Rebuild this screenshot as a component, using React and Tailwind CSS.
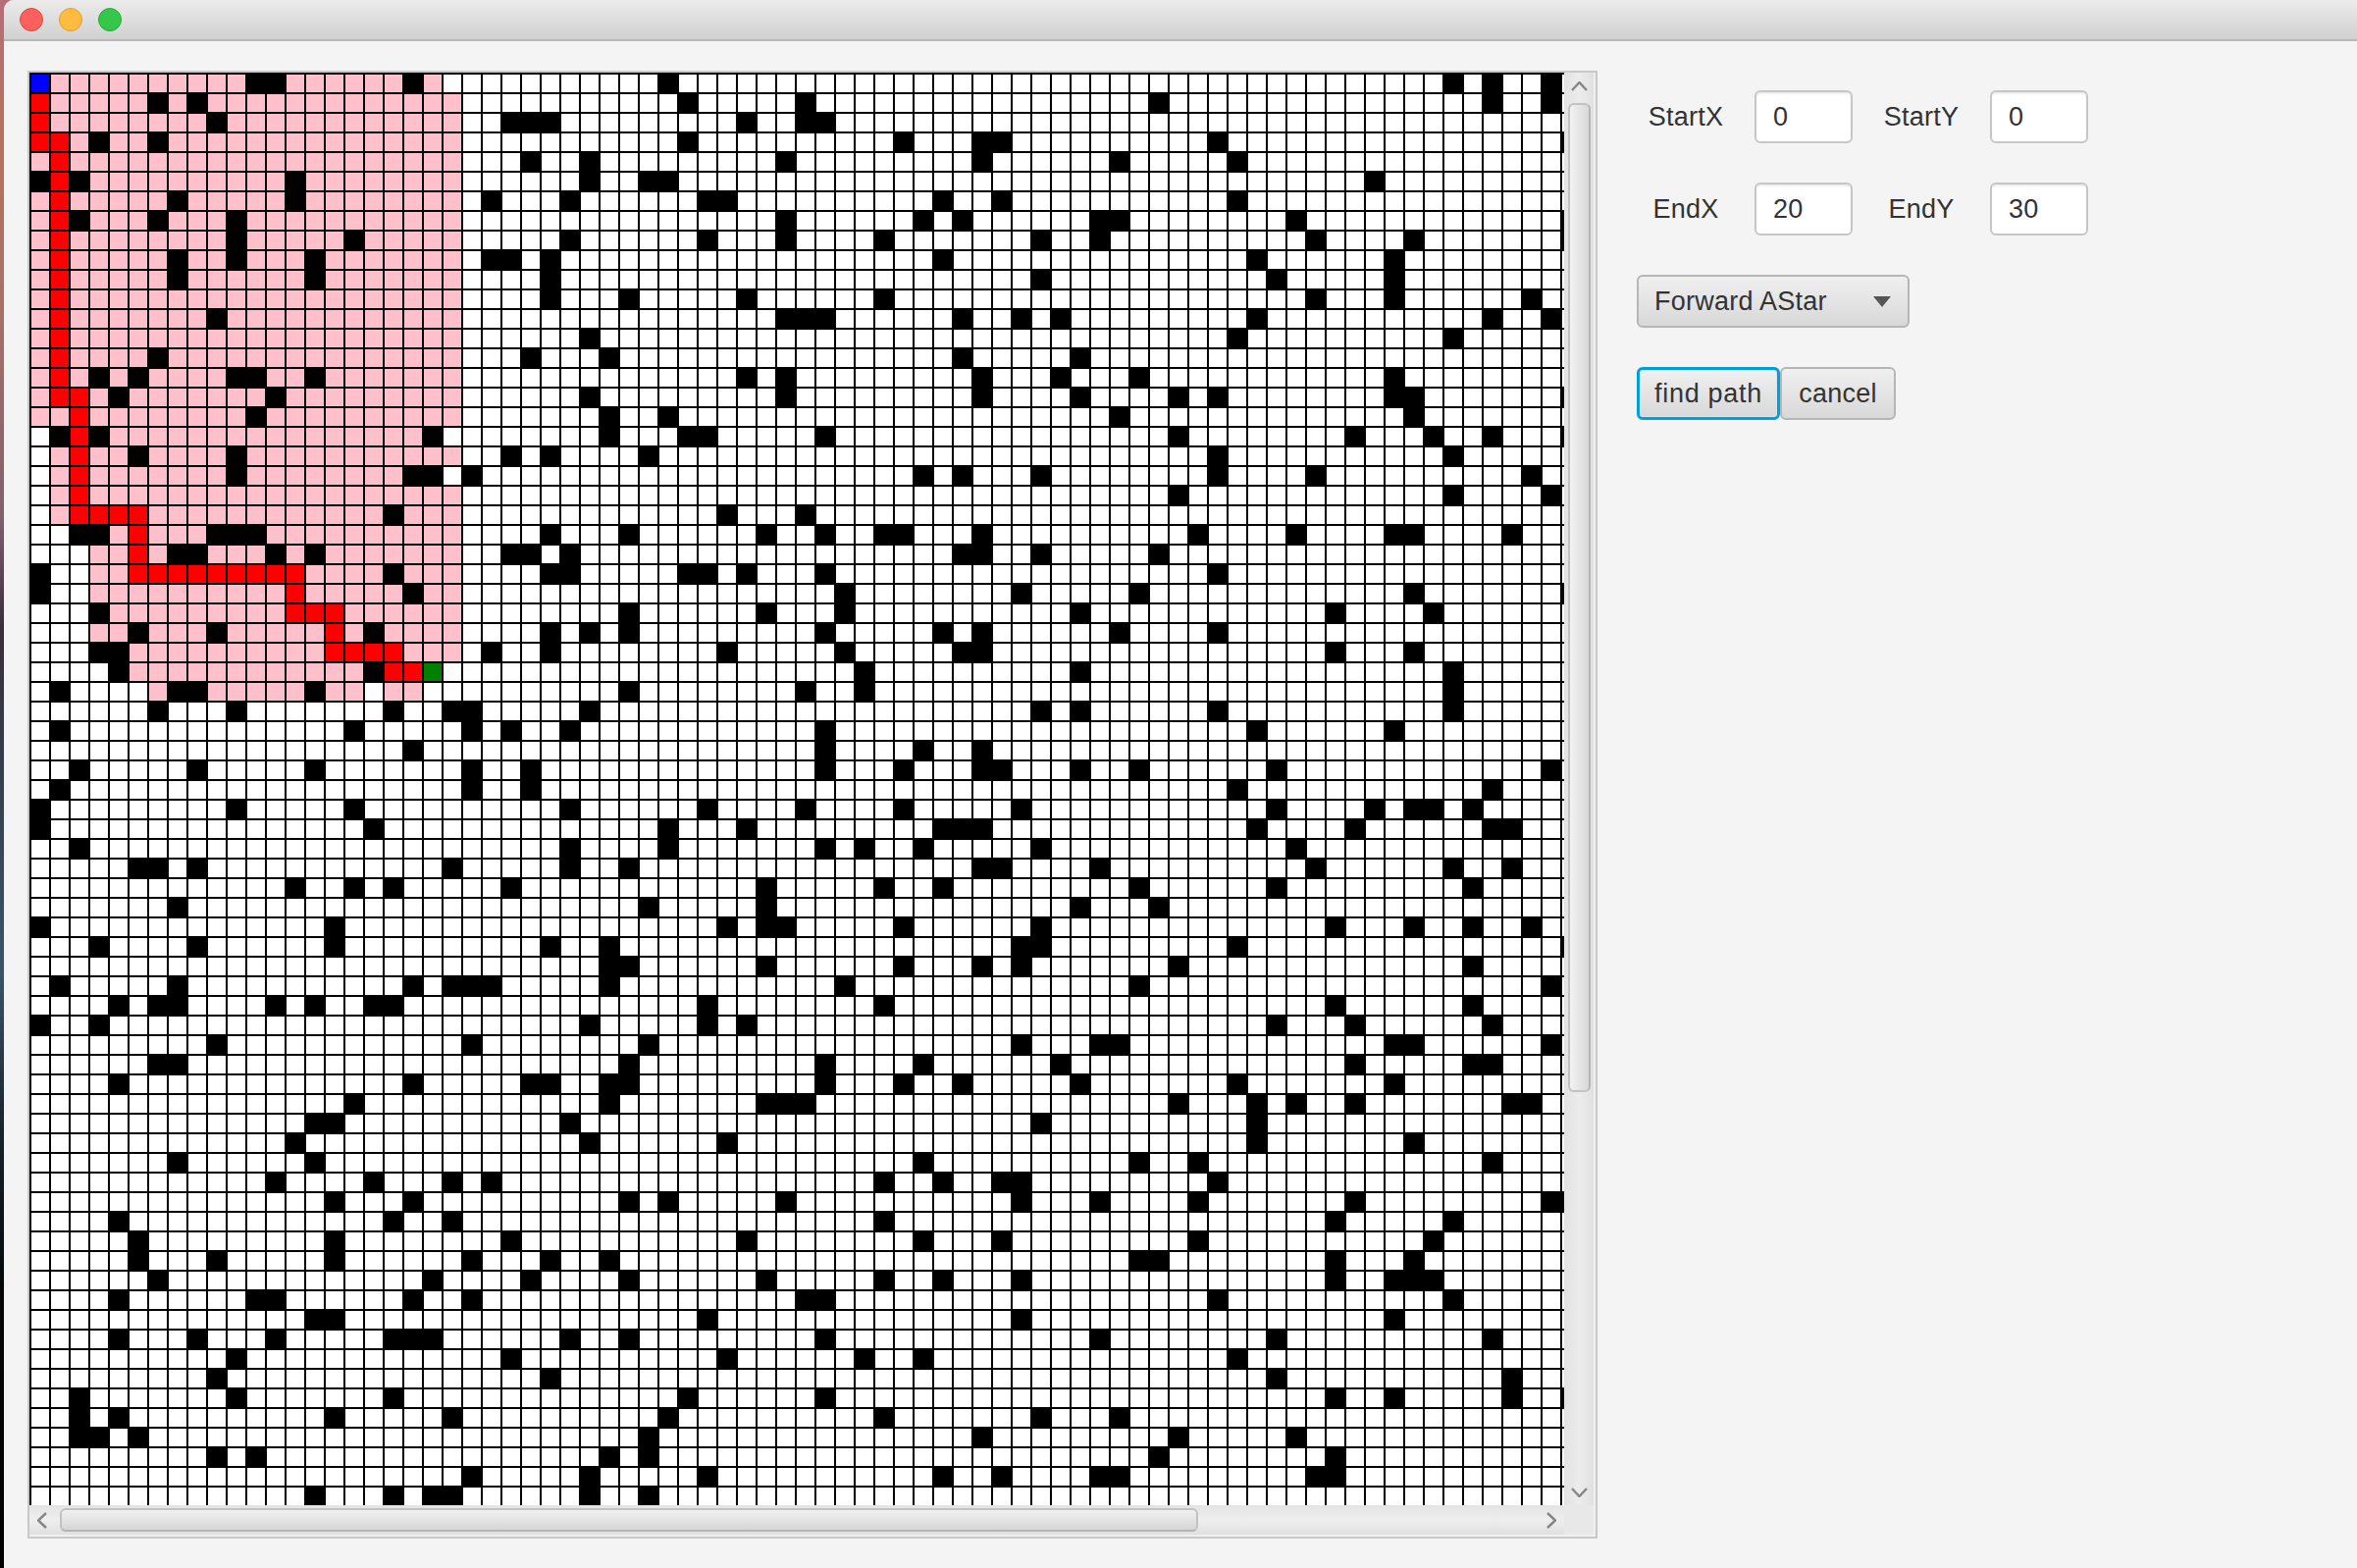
const BLACK = [
  [11,12,19,32,72,74,77],
  [6,8,33,39,57,74,77],
  [9,24,25,26,36,39,40],
  [3,6,33,44,48,49,60,78],
  [25,28,38,48,55,61],
  [0,2,13,28,31,32,68],
  [7,13,23,27,34,35,46,49,61],
  [2,6,10,38,45,47,54,55,64,78],
  [10,16,27,34,38,43,51,54,65,70,78],
  [7,10,14,23,24,26,46,62,69],
  [7,14,26,51,63,69],
  [26,30,36,43,65,69,76],
  [9,38,39,40,47,50,52,62,74,77],
  [28,61,72],
  [6,25,29,47,53],
  [3,5,10,11,14,36,38,48,52,56,69],
  [4,12,28,38,48,53,58,60,69,70,78],
  [11,29,32,55,70],
  [1,3,20,29,33,34,40,58,67,71,74,78],
  [5,10,24,26,31,60,72],
  [10,19,20,22,45,47,51,60,65,76],
  [58,72,77],
  [18,35,39],
  [2,3,9,10,11,26,30,37,40,43,44,48,59,64,69,70,75],
  [7,8,12,14,24,25,27,47,48,51,57],
  [0,18,26,27,33,34,36,40,60],
  [0,19,41,50,56,70,78],
  [3,30,37,41,53,66,71],
  [5,9,17,26,28,30,40,46,48,55,60],
  [3,4,23,26,35,41,47,48,66,70],
  [4,17,42,53,72],
  [1,7,8,14,30,39,42,72],
  [6,10,18,21,22,28,51,53,60,72],
  [1,16,22,24,27,40,62,69],
  [19,40,45,48],
  [2,8,14,22,25,40,44,48,49,53,56,63,77],
  [1,22,25,61,74],
  [0,10,16,27,34,39,44,50,63,68,70,71,73],
  [0,17,32,36,46,47,48,62,67,74,75],
  [2,27,32,40,42,45,51,64],
  [5,6,8,21,27,30,48,49,54,65,72,75],
  [13,16,18,24,37,43,46,56,63,73],
  [7,31,37,53,57],
  [0,15,35,37,38,44,51,66,70,73,76],
  [3,8,15,26,29,50,51,61,78],
  [29,30,37,44,48,50,58,73],
  [1,7,19,21,22,23,29,41,56,77],
  [4,6,7,12,14,17,18,34,43,66,73],
  [0,3,28,34,36,63,67,74],
  [9,22,31,50,54,55,69,70,77],
  [6,7,30,40,45,52,67,73,74],
  [4,19,25,26,29,30,40,44,47,53,61,69],
  [16,29,37,38,39,58,62,64,67,75,76],
  [14,15,27,51,62],
  [13,28,35,62,70],
  [7,14,45,56,59,74],
  [12,17,21,23,43,46,49,50,60],
  [15,19,30,32,38,50,54,59,67,77,78],
  [4,18,21,43,66,72],
  [5,15,24,36,45,49,59,71],
  [5,9,15,22,26,29,56,57,66,70],
  [6,20,25,30,37,43,46,50,66,69,70,71],
  [4,11,12,19,22,39,40,60,72],
  [14,15,34,50,69],
  [4,8,12,18,19,20,27,30,40,54,63,74],
  [10,24,35,42,45,61],
  [9,26,63,75],
  [2,10,18,33,40,66,69,75,78],
  [2,4,15,21,32,43,51,55],
  [2,3,5,31,48,58,64],
  [9,11,29,31,57,66],
  [22,28,34,46,49,54,55,65,66],
  [14,18,20,21,28,31],
];

const PATH = {
  1: [0], 2: [0], 3: [0, 1],
  4: [1], 5: [1], 6: [1], 7: [1], 8: [1], 9: [1], 10: [1], 11: [1], 12: [1], 13: [1], 14: [1], 15: [1],
  16: [1, 2], 17: [2], 18: [2], 19: [2], 20: [2], 21: [2],
  22: [2, 3, 4, 5], 23: [5], 24: [5],
  25: [5, 6, 7, 8, 9, 10, 11, 12, 13], 26: [13], 27: [13, 14, 15], 28: [15],
  29: [15, 16, 17, 18], 30: [18, 19],
};

const ROW_31_VISITED = [6, 9, 10, 11, 12, 13, 15, 16, 18, 19];

function isVisited(r, c) {
  if (r === 31) return ROW_31_VISITED.includes(c);
  if (r > 31) return false;
  let from = 0;
  if (r >= 18 && r <= 22) from = 1;
  else if (r === 23) from = 2;
  else if (r >= 24 && r <= 29) from = 3;
  else if (r === 30) from = 4;
  let to = 21;
  if (r === 0) to = 20;
  if (r === 18 || r === 20) to = 20;
  if (r === 30) to = 16;
  return c >= from && c <= to;
}

function cellClass(r, c) {
  if (r === 0 && c === 0) return "bg-[#0000ff]";
  if (r === 30 && c === 20) return "bg-[#008000]";
  if (BLACK[r].includes(c)) return "bg-black";
  if (PATH[r] && PATH[r].includes(c)) return "bg-[#ff0000]";
  if (isVisited(r, c)) return "bg-[#ffc0cb]";
  return "bg-white";
}

function Grid() {
  const cells = [];
  for (let r = 0; r < 73; r++) {
    for (let c = 0; c < 79; c++) {
      cells.push(<div key={r + "-" + c} className={cellClass(r, c)} />);
    }
  }
  return (
    <div className="grid w-max grid-cols-[repeat(79,18px)] auto-rows-[18px] gap-[2px] bg-black p-[2px]">
      {cells}
    </div>
  );
}

function Chevron({ dir, w, h }) {
  const pts = {
    up: `1,${h - 1} ${w / 2},1 ${w - 1},${h - 1}`,
    down: `1,1 ${w / 2},${h - 1} ${w - 1},1`,
    left: `${w - 1},1 1,${h / 2} ${w - 1},${h - 1}`,
    right: `1,1 ${w - 1},${h / 2} 1,${h - 1}`,
  }[dir];
  return (
    <svg width={w} height={h} viewBox={`0 0 ${w} ${h}`} fill="none">
      <polyline points={pts} stroke="#858585" strokeWidth="2.4" />
    </svg>
  );
}

function Field({ value }) {
  return (
    <div className="box-border flex h-[54px] w-[100px] items-center rounded-[6px] border-2 border-[#c6c6c6] bg-white pl-[17px] shadow-[inset_0_3px_3px_-2px_rgba(0,0,0,0.12)]">
      {value}
    </div>
  );
}

function Label({ children }) {
  return <div className="flex h-[54px] items-center justify-center">{children}</div>;
}

export default function App() {
  return (
    <div className="flex h-[1598px] w-[2402px] overflow-hidden bg-[linear-gradient(180deg,#b56f78_0%,#b8705c_9%,#a8706a_20%,#80606e_33%,#3a2e3c_40%,#34404f_50%,#3c5468_62%,#18242e_72%,#060808_82%,#000000_100%)] font-['Liberation_Sans',sans-serif] text-[27px] tracking-[0.25px] text-[#333333]">
      <div className="ml-[4px] flex min-w-0 flex-1 flex-col overflow-hidden rounded-tl-[10px] bg-[#f4f4f4]">
        <div className="box-border flex h-[42px] shrink-0 items-center gap-[16px] border-b-2 border-[#b8b8b8] bg-[linear-gradient(180deg,#ececec,#d0d0d0)] pl-[16px]">
          <div className="box-border h-[24px] w-[24px] rounded-full border border-[#e2463f] bg-[#fc615d]" />
          <div className="box-border h-[24px] w-[24px] rounded-full border border-[#e09e2f] bg-[#fdbc40]" />
          <div className="box-border h-[24px] w-[24px] rounded-full border border-[#27aa35] bg-[#34c749]" />
        </div>

        <div className="flex flex-1 gap-[40px] pl-[24px] pt-[30px]">
          <div className="box-border flex h-[1496px] w-[1600px] shrink-0 flex-col border-2 border-[#c8c8c8] bg-[#f0f0f0]">
            <div className="flex h-[1460px]">
              <div className="h-[1460px] w-[1564px] overflow-hidden">
                <Grid />
              </div>
              <div className="flex h-[1460px] w-[30px] flex-col bg-[linear-gradient(90deg,#e2e2e2,#ececec_50%,#e0e0e0)]">
                <div className="flex h-[31px] shrink-0 items-center justify-center pb-[3px]">
                  <Chevron dir="up" w={17} h={10} />
                </div>
                <div className="ml-[4px] box-border h-[1008px] w-[23px] rounded-[6px] border-2 border-[#c2c2c2] border-r-[#b4b4b4] bg-[linear-gradient(90deg,#f2f2f2,#d8d8d8)]" />
                <div className="flex-1" />
                <div className="flex h-[26px] shrink-0 items-center justify-center">
                  <Chevron dir="down" w={17} h={10} />
                </div>
              </div>
            </div>
            <div className="flex h-[30px]">
              <div className="flex h-[30px] w-[1564px] items-center bg-[linear-gradient(180deg,#e4e4e4,#eeeeee_50%,#e0e0e0)]">
                <div className="flex w-[31px] shrink-0 items-center justify-center pr-[6px]">
                  <Chevron dir="left" w={10} h={17} />
                </div>
                <div className="box-border h-[24px] w-[1160px] rounded-[6px] border-2 border-[#c2c2c2] border-b-[#b4b4b4] bg-[linear-gradient(180deg,#f0f0f0,#d6d6d6)]" />
                <div className="flex-1" />
                <div className="flex w-[26px] shrink-0 items-center justify-center">
                  <Chevron dir="right" w={10} h={17} />
                </div>
              </div>
              <div className="h-[30px] w-[30px] bg-[#e8e8e8]" />
            </div>
          </div>

          <div className="flex flex-col gap-[40px] pt-[20px]">
            <div className="grid grid-cols-[100px_100px_100px_100px] gap-x-[20px] gap-y-[40px]">
              <Label>StartX</Label>
              <Field value="0" />
              <Label>StartY</Label>
              <Field value="0" />
              <Label>EndX</Label>
              <Field value="20" />
              <Label>EndY</Label>
              <Field value="30" />
            </div>

            <div className="box-border flex h-[54px] w-[278px] items-center justify-between rounded-[6px] border-2 border-[#b6b6b6] bg-[linear-gradient(180deg,#f0f0f0,#d8d8d8)] pl-[16px] pr-[17px]">
              <span>Forward AStar</span>
              <svg width="18" height="11" viewBox="0 0 18 11">
                <polygon points="0,0 18,0 9,11" fill="#555555" />
              </svg>
            </div>

            <div className="flex">
              <div className="box-border flex h-[54px] w-[146px] items-center justify-center rounded-[6px] border-[3px] border-[#039ed3] bg-[linear-gradient(180deg,#f0f0f0,#d8d8d8)] tracking-[0.7px] shadow-[inset_0_0_0_1px_#cfeaf5]">
                find path
              </div>
              <div className="box-border flex h-[54px] w-[118px] items-center justify-center rounded-[6px] border-2 border-[#b6b6b6] bg-[linear-gradient(180deg,#f0f0f0,#d8d8d8)]">
                cancel
              </div>
            </div>
          </div>
        </div>
      </div>
    </div>
  );
}
